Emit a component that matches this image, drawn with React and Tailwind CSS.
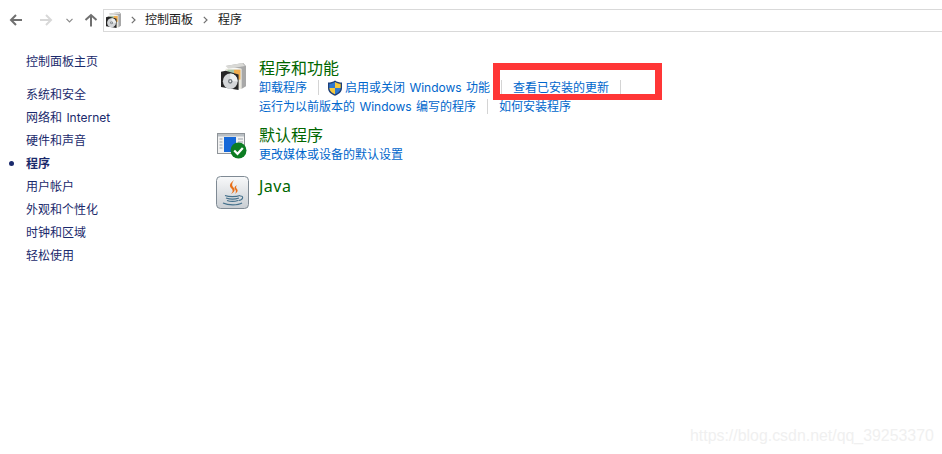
import React from 'react'

const navItems = ['系统和安全', '网络和 Internet', '硬件和声音', '程序', '用户帐户', '外观和个性化', '时钟和区域', '轻松使用']

const ProgramsIcon = ({ width = 25, height = 27 }) => (
    <svg width={width} height={height} viewBox="3 2 27 28" preserveAspectRatio="none">
        <path d="M8 5 L27 2 L30 5 L30 26 L25 29 L25 8 Z" fill="#a8a8a8" />
        <path d="M8 5 L26 2 L29 5 L11 8 Z" fill="#d9d9d6" />
        <path d="M8 8 L25 8 L25 29 L8 27 Z" fill="#e8e6dc" />
        <path d="M10 9 L17 9 L17 20 L10 20 Z" fill="#a9c8a8" />
        <path d="M17 9 L24 9 L24 19 L17 20 Z" fill="#f0ad4e" />
        <path d="M3 11 L8 10 L22 14 L22 30 L3 27 Z" fill="#262626" />
        <circle cx="13" cy="21" r="8" fill="#d4d6d8" />
        <path d="M13 13 A8 8 0 0 1 21 21 L13 21 Z" fill="#eef0f0" />
        <circle cx="13" cy="21" r="2.4" fill="#70777c" />
        <circle cx="13" cy="21" r="1" fill="#f4f4f4" />
    </svg>
)

const ShieldIcon = () => (
    <svg width="16" height="16" viewBox="0 0 16 16">
        <path d="M8 0.5 C10 2 12.5 2.6 15 2.6 L15 8 C15 12 11.5 14.5 8 15.8 C4.5 14.5 1 12 1 8 L1 2.6 C3.5 2.6 6 2 8 0.5 Z" fill="#1d3f78" />
        <path d="M8 2 L8 8 L2.3 8 L2.3 3.8 C4.4 3.7 6.3 3.2 8 2 Z" fill="#2f78d0" />
        <path d="M8 2 C9.7 3.2 11.6 3.7 13.7 3.8 L13.7 8 L8 8 Z" fill="#f6c93c" />
        <path d="M2.3 8 L8 8 L8 14.3 C5.2 13.1 2.6 11.2 2.3 8 Z" fill="#f6c93c" />
        <path d="M8 8 L13.7 8 C13.4 11.2 10.8 13.1 8 14.3 Z" fill="#2f78d0" />
    </svg>
)

const DefaultsIcon = () => (
    <svg width="30" height="26" viewBox="0 0 30 26">
        <rect x="0.5" y="0.5" width="27" height="20" fill="#f2f2f2" stroke="#8f9499" />
        <rect x="1" y="1" width="26" height="2.5" fill="#b9bfc4" />
        <rect x="7" y="4" width="12" height="15" fill="#1668d8" />
        <path d="M2.5 6h3M2.5 9h3M2.5 12h3M2.5 15h3M21 6h5M21 9h5M21 12h2" stroke="#9aa3aa" strokeWidth="1" />
        <circle cx="21.5" cy="17.5" r="8" fill="#0c7d22" />
        <path d="M17.2 17.5 L20.5 20.8 L25.8 15" fill="none" stroke="#fff" strokeWidth="2.2" />
    </svg>
)

const JavaIcon = () => (
    <svg width="33" height="33" viewBox="0 0 33 33">
        <defs>
            <linearGradient id="javaBg" x1="0" y1="0" x2="0" y2="1">
                <stop offset="0" stopColor="#f8f9fa" />
                <stop offset="1" stopColor="#c9ced3" />
            </linearGradient>
        </defs>
        <rect x="0.5" y="0.5" width="32" height="32" rx="4" fill="url(#javaBg)" stroke="#7f8a94" />
        <path d="M18 4 C13 8 13 10 16 13 C17.5 15 16 17 15 18 C20 15 19 13 17 11 C15.5 9 16 7 18 4 Z" fill="#e8701a" />
        <path d="M21 9 C18 11 18 12 19.5 14 C20.5 15.5 19.5 17 19 18 C22.5 15.5 22 14 20.5 12.5 C19.8 11.5 20 10.5 21 9 Z" fill="#e8701a" />
        <path d="M9 19.5 C13 21 20 21 24 19.5 M10 22 C14 23.4 19 23.4 23 22 M11 24.5 C14 25.5 19 25.5 22 24.5 M7 27 C12 29.5 22 29.5 26 27" fill="none" stroke="#45718c" strokeWidth="1.3" />
        <path d="M24 20 C28 19.5 27.5 24 22.5 24.5" fill="none" stroke="#45718c" strokeWidth="1.1" />
    </svg>
)

const Crumb = () => (
    <svg className="ml-[10px]" width="5" height="8" viewBox="0 0 5 8" fill="none" stroke="#707070" strokeWidth="1.2">
        <path d="M0.8 0.8 L4 4 L0.8 7.2" />
    </svg>
)

const Sep = () => <span className="mx-[11px] h-[15px] w-px bg-[#d4d4d4]" />

const LinkRow = ({ items }) => (
    <div className="flex h-[19px] items-center text-[12px] text-[#0066cc]">
        {items.map((item, idx) => (
            <React.Fragment key={idx}>
                {idx > 0 && <Sep />}
                {item.shield && (
                    <span className="ml-[-3px] mr-[2px] flex">
                        <ShieldIcon />
                    </span>
                )}
                <span className="whitespace-nowrap">{item.label}</span>
            </React.Fragment>
        ))}
    </div>
)

const Category = ({ icon, title, rows, className = '' }) => (
    <div className={`flex ${className}`}>
        <div className="w-[43px] shrink-0">{icon}</div>
        <div>
            <h2 className='h-[22px] font-["Noto_Sans","Noto_Sans_CJK_SC",sans-serif] text-[16px] leading-[24px] text-[#006600]'>{title}</h2>
            {rows.map((items, idx) => (
                <LinkRow key={idx} items={items} />
            ))}
        </div>
    </div>
)

export default function App() {
    return (
        <div className='relative h-[454px] w-[942px] overflow-hidden bg-white font-["Inter","Noto_Sans_CJK_SC",sans-serif] [word-spacing:1px]'>
            <div className="flex h-[41px] items-start pt-[9px]">
                <div className="flex h-[22px] w-[103px] items-center">
                    <svg className="ml-[9px]" width="14" height="14" viewBox="0 0 14 14" fill="none" stroke="#707070" strokeWidth="2">
                        <path d="M13 7 H2 M7 2 L2 7 L7 12" />
                    </svg>
                    <svg className="ml-[16px]" width="14" height="14" viewBox="0 0 14 14" fill="none" stroke="#d8d8d8" strokeWidth="2">
                        <path d="M1 7 H12 M7 2 L12 7 L7 12" />
                    </svg>
                    <svg className="ml-[13px]" width="7" height="5" viewBox="0 0 7 5" fill="none" stroke="#8a8a8a" strokeWidth="1.2">
                        <path d="M0.5 0.8 L3.5 3.8 L6.5 0.8" />
                    </svg>
                    <svg className="ml-[11px]" width="14" height="14" viewBox="0 0 14 14" fill="none" stroke="#707070" strokeWidth="2">
                        <path d="M7 13.5 V2 M1.5 7 L7 2 L12.5 7" />
                    </svg>
                </div>
                <div className="flex h-[23px] flex-1 items-center border border-r-0 border-[#d9d9d9] pb-px text-[12px] text-[#1a1a1a]">
                    <span className="ml-[2px] flex">
                        <ProgramsIcon width={15} height={16} />
                    </span>
                    <Crumb />
                    <span className="ml-[9px]">控制面板</span>
                    <Crumb />
                    <span className="ml-[10px]">程序</span>
                </div>
            </div>

            <div className="flex">
                <nav className="w-[216px] shrink-0 pl-[26px] pt-[9px] text-[12px] text-[#1a2a6c]">
                    <div className="mb-[10px] h-[23px] leading-[23px]">控制面板主页</div>
                    {navItems.map((label) => (
                        <div key={label} className={`relative h-[23px] leading-[23px] ${label === '程序' ? 'font-bold' : ''}`}>
                            {label === '程序' && <span className="absolute left-[-17px] top-[9px] h-[5px] w-[5px] rounded-full bg-[#1a2a6c]" />}
                            {label}
                        </div>
                    ))}
                </nav>
                <main className="flex-1 pt-[15px]">
                    <Category
                        icon={
                            <div className="ml-[5px] mt-[7px]">
                                <ProgramsIcon />
                            </div>
                        }
                        title="程序和功能"
                        rows={[
                            [{ label: '卸载程序' }, { label: '启用或关闭 Windows 功能', shield: true }, { label: '查看已安装的更新' }, { label: '' }],
                            [{ label: '运行为以前版本的 Windows 编写的程序' }, { label: '如何安装程序' }],
                        ]}
                    />
                    <Category
                        className="mt-[7px]"
                        icon={
                            <div className="ml-px mt-[10px]">
                                <DefaultsIcon />
                            </div>
                        }
                        title="默认程序"
                        rows={[[{ label: '更改媒体或设备的默认设置' }]]}
                    />
                    <Category
                        className="mt-[10px]"
                        icon={
                            <div className="mt-[2px]">
                                <JavaIcon />
                            </div>
                        }
                        title={<span className="tracking-[0.5px]">Java</span>}
                        rows={[]}
                    />
                </main>
            </div>

            <div className="absolute left-[493px] top-[63px] h-[37px] w-[169px] border-[7px] border-b-[6px] border-[#ff3636]" />
            <div className="absolute left-[690px] top-[426px] font-['Liberation_Sans',sans-serif] text-[15.9px] leading-[20px] text-[#f0f0f0]">
                https://blog.csdn.net/qq_39253370
            </div>
        </div>
    )
}
